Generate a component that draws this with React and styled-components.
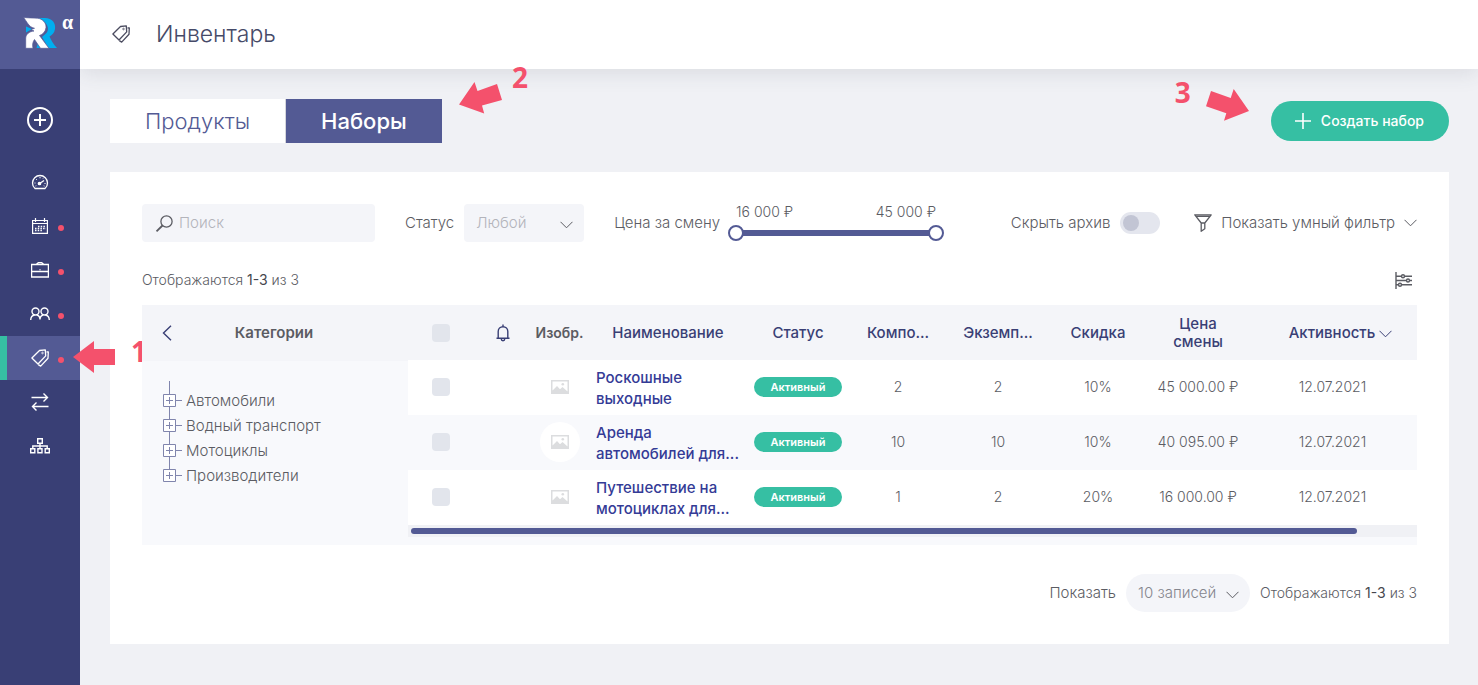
import React, { useState } from 'react';
import styled, { createGlobalStyle, css } from 'styled-components';

const GlobalStyle = createGlobalStyle`
  *, *::before, *::after { box-sizing: border-box; }
  body {
    margin: 0;
    background: #f0f1f5;
    color: #5b5c63;
    font-family: Inter, "Liberation Sans", sans-serif;
    font-size: 15px;
    font-weight: 300;
    line-height: 20px;
  }
  button, input, select { font: inherit; color: inherit; }
  button { background: none; border: 0; padding: 0; cursor: pointer; }
  a { color: inherit; text-decoration: none; }
`;

/* ---------- layout ---------- */

const Page = styled.div`
  display: flex;
  min-height: 100vh;
`;

const Sidebar = styled.aside`
  flex: 0 0 80px;
  position: relative;
  z-index: 2;
  background: #393f75;
  color: #fff;
`;

const Main = styled.div`
  flex: 1;
  min-width: 0;
`;

const Header = styled.header`
  display: flex;
  align-items: center;
  gap: 26px;
  height: 69px;
  padding: 0 32px 2px;
  background: #fff;
  color: #4b4c60;
  box-shadow: 0 4px 20px rgba(60, 64, 80, 0.12);
`;

const Title = styled.h1`
  margin: 0;
  font-size: 23px;
  font-weight: 300;
  line-height: 28px;
  color: #464a68;
`;

const Content = styled.main`
  padding: 30px 29px 41px 30px;
`;

const Toolbar = styled.div`
  display: flex;
  justify-content: space-between;
  align-items: center;
  height: 44px;
  margin-bottom: 29px;
`;

const Card = styled.section`
  padding: 32px;
  background: #fff;
`;

/* ---------- sidebar ---------- */

const Brand = styled.a`
  display: flex;
  align-items: flex-start;
  gap: 4px;
  height: 69px;
  padding: 15px 0 0 23px;
  background: #535a94;
`;

const Alpha = styled.span`
  font-family: "Liberation Serif", serif;
  font-size: 20px;
  font-weight: 700;
  line-height: 14px;
`;

const AddButton = styled.button`
  display: flex;
  justify-content: center;
  width: 100%;
  padding: 38px 0 27px;
`;

const NavItem = styled.a`
  display: flex;
  align-items: center;
  justify-content: center;
  position: relative;
  height: 44px;
  ${(p) => p.$active && css`
    background: #535a94;
    box-shadow: inset 7px 0 0 #36bfa3;
  `}
  ${(p) => p.$dot && css`
    &::after {
      content: "";
      position: absolute;
      left: 58px;
      top: 21px;
      width: 6px;
      height: 6px;
      border-radius: 50%;
      background: #f4516c;
    }
  `}
`;

/* ---------- callouts ---------- */

const Anchor = styled.div`
  position: relative;
`;

const Callout = styled.div`
  position: absolute;
  left: ${(p) => p.$left}px;
  top: ${(p) => p.$top}px;
  color: #f4516c;
  pointer-events: none;
`;

const StepNumber = styled.b`
  display: block;
  font-family: "Open Sans", sans-serif;
  font-size: 28px;
  font-weight: 700;
  line-height: 40px;
  ${(p) => p.$clipped && css`
    width: 11px;
    overflow: hidden;
  `}
`;

/* ---------- tabs and primary button ---------- */

const Tabs = styled.div`
  display: flex;
`;

const Tab = styled.button`
  height: 44px;
  padding: 0 35px;
  font-size: 22px;
  font-weight: ${(p) => (p.$active ? 500 : 300)};
  color: ${(p) => (p.$active ? '#fff' : '#535a94')};
  background: ${(p) => (p.$active ? '#535a94' : '#fff')};
  border-left: ${(p) => (p.$active ? '1px solid #d5d6dc' : '0')};
`;

const CreateButton = styled.button`
  display: flex;
  align-items: center;
  gap: 9px;
  height: 40px;
  padding: 0 25px 0 23px;
  border-radius: 20px;
  background: #36bfa3;
  color: #fff;
  font-size: 14px;
  font-weight: 500;
`;

/* ---------- filters ---------- */

const Filters = styled.div`
  display: flex;
  align-items: center;
  justify-content: space-between;
  height: 38px;
`;

const FieldGroup = styled.div`
  display: flex;
  align-items: center;
  gap: ${(p) => p.$gap || 10}px;
`;

const SearchBox = styled.label`
  display: flex;
  align-items: center;
  gap: 5px;
  width: 233px;
  height: 38px;
  padding: 0 13px;
  border-radius: 4px;
  background: #f4f5f9;
`;

const SearchInput = styled.input`
  flex: 1;
  min-width: 0;
  border: 0;
  padding: 0;
  outline: 0;
  background: transparent;
  &::placeholder { color: #b3b4bb; opacity: 1; }
`;

const SelectWrap = styled.div`
  display: grid;
  align-items: center;
  > * { grid-area: 1 / 1; }
  > svg { justify-self: end; margin: 4px 11px 0 0; pointer-events: none; }
`;

const Select = styled.select`
  appearance: none;
  width: ${(p) => (p.$round ? 124 : 120)}px;
  height: 38px;
  padding: 0 12px;
  border: 0;
  border-radius: ${(p) => (p.$round ? 19 : 4)}px;
  background: #f4f5f9;
  color: ${(p) => (p.$round ? '#85868e' : '#b3b4bb')};
`;

const Range = styled.div`
  display: grid;
  width: 216px;
  row-gap: 3px;
  padding-bottom: 4px;
`;

const RangeValues = styled.div`
  display: flex;
  justify-content: space-between;
  padding: 0 8px;
  font-size: 14px;
`;

const RangeTrack = styled.div`
  display: grid;
  align-items: center;
  height: 16px;
  background: linear-gradient(#535a94, #535a94) center / 200px 6px no-repeat;
`;

const RangeInput = styled.input`
  grid-area: 1 / 1;
  appearance: none;
  width: 100%;
  height: 16px;
  margin: 0;
  background: transparent;
  pointer-events: none;
  &::-webkit-slider-thumb {
    appearance: none;
    width: 16px;
    height: 16px;
    border: 2px solid #535a94;
    border-radius: 50%;
    background: #fff;
    pointer-events: auto;
  }
`;

const Toggle = styled.input`
  appearance: none;
  display: flex;
  align-items: center;
  width: 40px;
  height: 22px;
  margin: 0;
  padding: 0 3px;
  border-radius: 11px;
  background: #e4e6ee;
  &::before {
    content: "";
    width: 16px;
    height: 16px;
    border-radius: 50%;
    background: #c2c5d4;
  }
  &:checked { background: #36bfa3; justify-content: flex-end; }
`;

const TextButton = styled.button`
  display: flex;
  align-items: center;
  gap: 9px;
`;

const Summary = styled.div`
  display: flex;
  align-items: center;
  justify-content: space-between;
  padding: 28px 5px 15px 0;
`;

const Count = styled.span`
  font-size: 14px;
  b { font-weight: 400; color: #45464d; }
`;

/* ---------- category tree ---------- */

const Board = styled.div`
  display: flex;
  background: #f8f9fc;
`;

const Categories = styled.div`
  flex: 0 0 266px;
  min-height: 240px;
`;

const CategoriesHead = styled.div`
  display: flex;
  align-items: center;
  height: 56px;
  padding-left: 20px;
  background: #f4f5f9;
  color: #393f75;
`;

const CategoriesTitle = styled.h2`
  flex: 1;
  margin: 0;
  padding-right: 32px;
  text-align: center;
  font-size: 15px;
  font-weight: 600;
  color: #5b5c63;
`;

const Tree = styled.ul`
  list-style: none;
  margin: 0;
  padding: 20px 0 0 20px;
  &::before {
    content: "";
    display: block;
    width: 1px;
    height: 7px;
    margin-left: 7px;
    background: #8085ad;
  }
`;

const TreeButton = styled.button`
  display: flex;
  align-items: center;
  gap: 4px;
  height: 25px;
`;

/* ---------- table ---------- */

const TablePane = styled.div`
  flex: 1;
  min-width: 0;
`;

const Table = styled.table`
  width: 100%;
  table-layout: fixed;
  border-collapse: collapse;
`;

const Col = styled.col`
  width: ${(p) => (p.$w ? `${p.$w}px` : 'auto')};
`;

const HeadCell = styled.th`
  height: 55px;
  padding: 0 ${(p) => p.$pad || 0}px;
  background: #f4f5f9;
  color: ${(p) => (p.$plain ? '#5b5c63' : '#393f75')};
  font-weight: ${(p) => (p.$plain ? 600 : 500)};
  font-size: ${(p) => (p.$plain ? 14 : 15)}px;
  line-height: 18px;
  white-space: ${(p) => (p.$wrap ? 'normal' : 'nowrap')};
  vertical-align: middle;
  > svg { display: block; margin: 0 auto; }
`;

const SortButton = styled.button`
  display: inline-flex;
  align-items: center;
  gap: 4px;
  padding-left: 16px;
  > svg { margin-top: 2px; }
`;

const Row = styled.tr`
  background: ${(p) => (p.$striped ? '#f8f9fc' : '#fff')};
`;

const Cell = styled.td`
  height: 55px;
  padding: 0 0 2px;
  text-align: center;
  vertical-align: middle;
  font-size: 14px;
`;

const NameCell = styled(Cell)`
  padding: 0 8px;
  text-align: left;
  font-size: 15px;
`;

const NameLink = styled.a`
  display: -webkit-box;
  -webkit-box-orient: vertical;
  -webkit-line-clamp: 2;
  overflow: hidden;
  color: #343b96;
  font-weight: 500;
  line-height: 21px;
`;

const Tick = styled.input`
  appearance: none;
  display: block;
  width: 18px;
  height: 18px;
  margin: 0 auto;
  border-radius: 4px;
  background: #e2e5ec;
  &:checked { background: #535a94; }
`;

const Thumb = styled.span`
  display: flex;
  align-items: center;
  justify-content: center;
  width: 40px;
  height: 40px;
  margin: 0 auto;
  border-radius: 50%;
  background: #fff;
`;

const Badge = styled.span`
  display: block;
  width: 88px;
  margin: 0 auto;
  border-radius: 10px;
  background: #36bfa3;
  color: #fff;
  font-size: 11px;
  font-weight: 600;
  line-height: 20px;
`;

const ScrollTrack = styled.div`
  height: 12px;
  padding: 3px 60px 3px 3px;
  background: #f0f1f5;
  &::before {
    content: "";
    display: block;
    height: 6px;
    border-radius: 3px;
    background: #535a94;
  }
`;

const Pager = styled.div`
  display: flex;
  align-items: center;
  justify-content: flex-end;
  gap: 10px;
  padding-top: 29px;
`;

/* ---------- icons ---------- */

const Stroke = ({ w, h, vb, sw = 1, children }) => (
  <svg width={w} height={h} viewBox={vb || `0 0 ${w} ${h}`} fill="none" stroke="currentColor" strokeWidth={sw} aria-hidden="true">
    {children}
  </svg>
);

const Logo = () => (
  <svg width="35" height="34" viewBox="0 0 35 34" aria-hidden="true">
    <path fill="#00aeef" d="M15.500 3H22c7 .2 11 5 10 11-.6 4-3 6-5.500 7.500 1.500 3.500 4 8 7.500 11.500h-8.500L19 22l4.500-4c3.500-4 1-11-8-15zM3 11.500l6 2.500-6 3.500zM16 25l6.500 8h-9z" />
    <path fill="#fff" stroke="#535a94" strokeWidth="0.700" d="M.5 2.500C5 3.200 10 2.700 14.500 3.200c5 .5 9 4.800 8.500 9.300-.5 4.500-3.500 7-6.500 8L26 33.300h-8.500L11.500 24.500c-1.500 2-2.500 5-1.500 8.800H2.700V23c.5-4 3.300-6.300 8.300-7L8 14.600l3.500-1.300C5.500 12 4 6.500.5 2.500z" />
  </svg>
);

const PlusCircle = () => (
  <Stroke w={26} h={26} sw={2}>
    <circle cx="13" cy="13" r="12" />
    <path d="M13 7v12M7 13h12" />
  </Stroke>
);

const Gauge = () => (
  <Stroke w={18} h={16} sw={1.3}>
    <path d="M4 14.500h10c1.600-1.200 2.500-3 2.500-5.500a7.500 7.500 0 0 0-15 0c0 2.500.900 4.300 2.500 5.500z" />
    <circle cx="8.500" cy="9.500" r="1.200" fill="currentColor" />
    <path d="M9 9.200l4-2.700" />
    <path d="M3.500 9h1M13.500 9.500h1M5 5l.8.8M9 3v1.300M12 4.500l.5-.6M4.500 12l.8-.3M12.700 11.800l.8.300" strokeWidth="1" />
  </Stroke>
);

const Calendar = () => (
  <Stroke w={16} h={16} sw={1.2}>
    <path d="M.6 2.500h14.800v12.900H.6zM.6 5.500h14.800M3.500 0v4M12.500 0v4" />
    <path d="M6 8.500h8M3 10.500h11M3 12.500h8" strokeWidth="1.300" strokeDasharray="1.500 1.200" />
  </Stroke>
);

const Briefcase = () => (
  <Stroke w={18} h={16} sw={1.3}>
    <path d="M.6 2.500h16.800v12.500H.6zM.6 9.500h16.800M6 2.500V1.500L7.500.6h3L12 1.500v1M9 7.200v1" />
  </Stroke>
);

const People = () => (
  <Stroke w={20} h={14} sw={1.4}>
    <circle cx="5.500" cy="4.500" r="3.500" />
    <circle cx="14.500" cy="4.500" r="3.500" />
    <path d="M.7 13c.1-3 1.600-4.700 4-5M10 12.500c0-2.500-1.200-4-3.200-4.500M10 12.500c0-2.500 1.200-4 3.200-4.500M19.300 13c-.1-3-1.600-4.700-4-5" />
  </Stroke>
);

const Tags = () => (
  <Stroke w={18} h={18} sw={1.3}>
    <path d="M.9 9 8.500 1.500l5.800-.6.400 6L7 15z" strokeLinejoin="round" />
    <path d="M15.500 2.800l1.800.2-.3 6.200-7.300 7.900-2.400-1.500" strokeLinejoin="round" />
    <circle cx="11.500" cy="4" r=".8" strokeWidth=".8" />
  </Stroke>
);

const Swap = () => (
  <Stroke w={18} h={18} sw={1.4}>
    <path d="M.5 4.500h16M12.500.5l4 4-4 4M17.500 13.500h-16M5.500 9.500l-4 4 4 4" />
  </Stroke>
);

const Sitemap = () => (
  <Stroke w={20} h={16} sw={1.4}>
    <path d="M7.700.7h4.600v4.600H7.700zM.7 10.700h4.100v4H.7zM7.900 10.700H12v4H7.900zM15.200 10.700h4.100v4h-4.100zM10 5.300v5.400M2.800 10.700V8h14.400v2.700" />
  </Stroke>
);

const SearchIcon = () => (
  <Stroke w={19} h={17} sw={1.3}>
    <circle cx="11.500" cy="6.500" r="5.600" />
    <path d="M7.500 10.500 1.500 16.300" strokeWidth="1.800" />
  </Stroke>
);

const Chevron = () => (
  <Stroke w={13} h={8}>
    <path d="M.5.8l6 6 6-6" />
  </Stroke>
);

const ChevronLeft = () => (
  <Stroke w={10} h={16} sw={1.4}>
    <path d="M9 .8 1.500 8 9 15.200" />
  </Stroke>
);

const Funnel = () => (
  <Stroke w={18} h={18} sw={1.300}>
    <path d="M.8.8h16.400L10.800 9v5.800L7.200 17.300V9zM7.200 9h3.600M2.500 2.300h13" strokeLinejoin="round" />
  </Stroke>
);

const Columns = () => (
  <Stroke w={17} h={17} sw={1.400}>
    <path d="M1 0v17M1 4.200h5.500M9.500 4.200H17M1 8.500h10.500M14.500 8.500H17M1 12.800h2.500M6.500 12.800H17" />
    <circle cx="8" cy="4.200" r="1.500" />
    <circle cx="13" cy="8.500" r="1.500" />
    <circle cx="5" cy="12.800" r="1.500" />
  </Stroke>
);

const Bell = () => (
  <Stroke w={14} h={18} sw={1.4}>
    <path d="M.5 14.300h13M2.200 14V7.500a4.800 4.800 0 0 1 9.600 0V14M7 2.500V.5M5.300 15a1.700 1.700 0 0 0 3.400 0" />
  </Stroke>
);

const Plus = () => (
  <Stroke w={18} h={16} sw={1.6}>
    <path d="M9 0v16M1 8h16" />
  </Stroke>
);

const Picture = () => (
  <svg width="18" height="14" viewBox="0 0 18 14" aria-hidden="true">
    <path fill="#dcdddf" fillRule="evenodd" d="M0 0h18v14H0zM1.500 1.500v9L6 6l3 3.200L11.500 7l5 4.500v-10z" />
    <circle cx="11.800" cy="4.300" r="1.300" fill="#dcdddf" />
    <path fill="#dcdddf" d="M1.500 11.500 6 7l3 3 2.500-2 5 4v1h-15z" />
  </svg>
);

const TreeNode = () => (
  <svg width="20" height="25" viewBox="0 0 20 25" fill="none" stroke="#8085ad" aria-hidden="true">
    <path d="M7.500 0v6M13.500 12.500H20" />
    <path d="M1.500 6.500h12v12h-12z" fill="#fff" />
    <path d="M7.500 9v7M4 12.500h7" />
  </svg>
);

const TreeLine = styled.span`
  display: flex;
  background: ${(p) => (p.$last ? 'none' : 'linear-gradient(#8085ad, #8085ad) 7px 100% / 1px 6px no-repeat')};
`;

const ArrowWest = () => (
  <svg width="42" height="32" viewBox="0 0 42 32" fill="currentColor" aria-hidden="true">
    <path d="M0 16 21 0v8h21v16H21v8z" />
  </svg>
);

const ArrowSouthWest = () => (
  <svg width="43" height="32" viewBox="0 0 43 32" fill="currentColor" aria-hidden="true">
    <path d="M0 22.500 15.500 0l3 9L38 2l5 16-20 5.500 2.200 8z" />
  </svg>
);

const ArrowSouthEast = () => (
  <svg width="43" height="32" viewBox="0 0 43 32" fill="currentColor" aria-hidden="true">
    <path d="M43 22 27.700 0l-3 9L5 2 0 17.300l20.300 7-2.300 7.500z" />
  </svg>
);

/* ---------- data ---------- */

const NAV = [
  { label: 'Панель', Icon: Gauge },
  { label: 'Календарь', Icon: Calendar, dot: true },
  { label: 'Заказы', Icon: Briefcase, dot: true },
  { label: 'Клиенты', Icon: People, dot: true },
  { label: 'Инвентарь', Icon: Tags, dot: true, active: true },
  { label: 'Перемещения', Icon: Swap },
  { label: 'Структура', Icon: Sitemap },
];

const CATEGORIES = ['Автомобили', 'Водный транспорт', 'Мотоциклы', 'Производители'];

const WIDTHS = [66, 57, 57, 160, 100, 100, 100, 100, 100, null];

const ROWS = [
  { name: 'Роскошные выходные', parts: 2, items: 2, discount: '10%', price: '45 000.00 ₽', date: '12.07.2021' },
  { name: 'Аренда автомобилей для...', parts: 10, items: 10, discount: '10%', price: '40 095.00 ₽', date: '12.07.2021' },
  { name: 'Путешествие на мотоциклах для...', parts: 1, items: 2, discount: '20%', price: '16 000.00 ₽', date: '12.07.2021' },
];

const Shown = () => (
  <Count>Отображаются <b>1-3</b> из 3</Count>
);

export default function App() {
  const [low, setLow] = useState(16000);
  const [high, setHigh] = useState(45000);
  const format = (n) => `${Math.floor(n / 1000)} ${String(n % 1000).padStart(3, '0')} ₽`;

  return (
    <Page>
      <GlobalStyle />
      <Sidebar>
        <Brand href="#home" aria-label="Главная">
          <Logo />
          <Alpha>α</Alpha>
        </Brand>
        <AddButton aria-label="Добавить"><PlusCircle /></AddButton>
        <nav>
          {NAV.map(({ label, Icon, dot, active }) => (
            <Anchor key={label}>
              <NavItem href="#nav" aria-label={label} $dot={dot} $active={active}><Icon /></NavItem>
              {active && (
                <>
                  <Callout $left={73} $top={5}><ArrowWest /></Callout>
                  <Callout $left={131} $top={-5}><StepNumber $clipped>1</StepNumber></Callout>
                </>
              )}
            </Anchor>
          ))}
        </nav>
      </Sidebar>

      <Main>
        <Header>
          <Tags />
          <Title>Инвентарь</Title>
        </Header>

        <Content>
          <Toolbar>
            <Anchor>
              <Tabs>
                <Tab>Продукты</Tab>
                <Tab $active>Наборы</Tab>
              </Tabs>
              <Callout $left={349} $top={-17}><ArrowSouthWest /></Callout>
              <Callout $left={402} $top={-42}><StepNumber>2</StepNumber></Callout>
            </Anchor>
            <Anchor>
              <CreateButton><Plus />Создать набор</CreateButton>
              <Callout $left={-65} $top={-12}><ArrowSouthEast /></Callout>
              <Callout $left={-96} $top={-29}><StepNumber>3</StepNumber></Callout>
            </Anchor>
          </Toolbar>

          <Card>
            <Filters>
              <FieldGroup $gap={30}>
                <SearchBox>
                  <SearchIcon />
                  <SearchInput type="search" placeholder="Поиск" aria-label="Поиск" />
                </SearchBox>
                <FieldGroup>
                  <label htmlFor="status">Статус</label>
                  <SelectWrap>
                    <Select id="status"><option>Любой</option></Select>
                    <Chevron />
                  </SelectWrap>
                </FieldGroup>
                <FieldGroup $gap={8}>
                  <label htmlFor="price-low">Цена за смену</label>
                  <Range>
                    <RangeValues><span>{format(low)}</span><span>{format(high)}</span></RangeValues>
                    <RangeTrack>
                      <RangeInput id="price-low" type="range" min={16000} max={45000} value={low} onChange={(e) => setLow(Math.min(+e.target.value, high))} />
                      <RangeInput aria-label="Цена до" type="range" min={16000} max={45000} value={high} onChange={(e) => setHigh(Math.max(+e.target.value, low))} />
                    </RangeTrack>
                  </Range>
                </FieldGroup>
              </FieldGroup>
              <FieldGroup $gap={34}>
                <FieldGroup>
                  <label htmlFor="hide-archive">Скрыть архив</label>
                  <Toggle id="hide-archive" type="checkbox" />
                </FieldGroup>
                <TextButton><Funnel />Показать умный фильтр<Chevron /></TextButton>
              </FieldGroup>
            </Filters>

            <Summary>
              <Shown />
              <TextButton aria-label="Настроить столбцы"><Columns /></TextButton>
            </Summary>

            <Board>
              <Categories>
                <CategoriesHead>
                  <TextButton aria-label="Свернуть"><ChevronLeft /></TextButton>
                  <CategoriesTitle>Категории</CategoriesTitle>
                </CategoriesHead>
                <Tree>
                  {CATEGORIES.map((name, i) => (
                    <li key={name}>
                      <TreeButton>
                        <TreeLine $last={i === CATEGORIES.length - 1}><TreeNode /></TreeLine>
                        {name}
                      </TreeButton>
                    </li>
                  ))}
                </Tree>
              </Categories>

              <TablePane>
                <Table>
                  <colgroup>
                    {WIDTHS.map((w, i) => <Col key={i} $w={w} />)}
                  </colgroup>
                  <thead>
                    <tr>
                      <HeadCell><Tick type="checkbox" aria-label="Выбрать все" /></HeadCell>
                      <HeadCell aria-label="Уведомления"><Bell /></HeadCell>
                      <HeadCell $plain>Изобр.</HeadCell>
                      <HeadCell>Наименование</HeadCell>
                      <HeadCell>Статус</HeadCell>
                      <HeadCell>Компо...</HeadCell>
                      <HeadCell>Экземп...</HeadCell>
                      <HeadCell>Скидка</HeadCell>
                      <HeadCell $wrap $pad={20}>Цена смены</HeadCell>
                      <HeadCell><SortButton>Активность<Chevron /></SortButton></HeadCell>
                    </tr>
                  </thead>
                  <tbody>
                    {ROWS.map((r, i) => (
                      <Row key={r.name} $striped={i % 2 === 1}>
                        <Cell><Tick type="checkbox" aria-label={r.name} /></Cell>
                        <Cell />
                        <Cell><Thumb><Picture /></Thumb></Cell>
                        <NameCell><NameLink href="#set">{r.name}</NameLink></NameCell>
                        <Cell><Badge>Активный</Badge></Cell>
                        <Cell>{r.parts}</Cell>
                        <Cell>{r.items}</Cell>
                        <Cell>{r.discount}</Cell>
                        <Cell>{r.price}</Cell>
                        <Cell>{r.date}</Cell>
                      </Row>
                    ))}
                  </tbody>
                </Table>
                <ScrollTrack />
              </TablePane>
            </Board>

            <Pager>
              <label htmlFor="page-size">Показать</label>
              <SelectWrap>
                <Select id="page-size" $round><option>10 записей</option></Select>
                <Chevron />
              </SelectWrap>
              <Shown />
            </Pager>
          </Card>
        </Content>
      </Main>
    </Page>
  );
}
